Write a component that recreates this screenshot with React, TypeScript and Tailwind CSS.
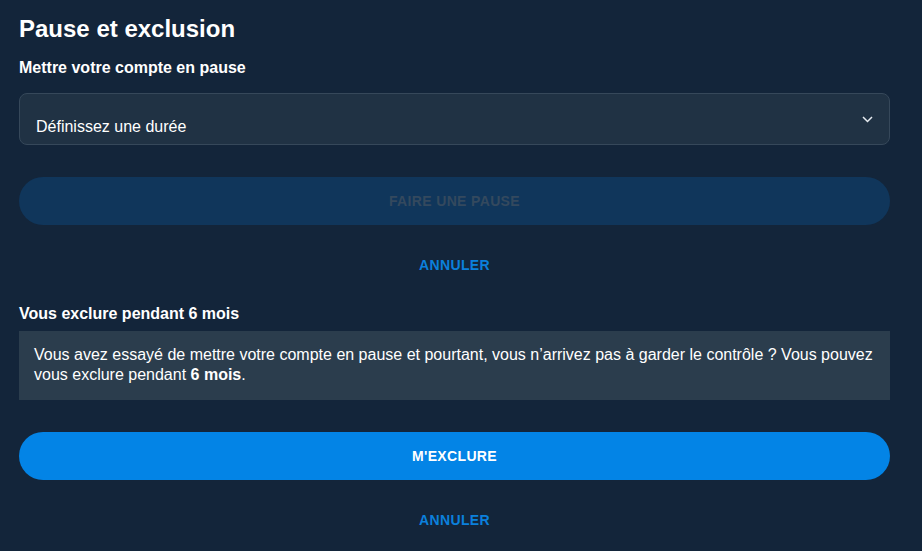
import React, { useState } from "react";

const durations = ["24 heures", "7 jours", "30 jours", "3 mois"];

const App = () => {
  const [duration, setDuration] = useState("");

  return (
    <div
      className="min-h-screen w-full bg-[#13253a] text-white"
      style={{ fontFamily: '"Liberation Sans", Arial, sans-serif' }}
    >
      <div className="w-[890px] pl-[19px] pt-[13px] pb-4">
        {/* PAUSE */}
        <h1 className="text-[24px] leading-8 font-bold">Pause et exclusion</h1>
        <h2 className="mt-[11px] text-[16px] leading-6 font-bold">
          Mettre votre compte en pause
        </h2>

        <div className="relative mt-[13px] h-[52px] rounded-lg border border-[#36485a] bg-[#203244]">
          <select
            value={duration}
            onChange={(e) => setDuration(e.target.value)}
            className="h-full w-full appearance-none bg-transparent pl-4 pr-10 pt-[21px] pb-[5px] text-[16px] leading-6 text-white outline-none"
          >
            <option value="" className="bg-[#203244]">
              Définissez une durée
            </option>
            {durations.map((d) => (
              <option key={d} value={d} className="bg-[#203244]">
                {d}
              </option>
            ))}
          </select>
          <svg
            className="pointer-events-none absolute right-[16px] top-[22px]"
            width="11"
            height="7"
            viewBox="0 0 11 7"
            fill="none"
          >
            <path d="M1 1l4.5 4.5L10 1" stroke="#e6ebf0" strokeWidth="1.5" />
          </svg>
        </div>

        <button
          disabled={!duration}
          className={
            duration
              ? "mt-8 h-12 w-full rounded-full bg-[#0384e6] text-[14px] font-bold tracking-wide text-white"
              : "mt-8 h-12 w-full rounded-full bg-[#10365b] text-[14px] font-bold tracking-wide text-[#34495e]"
          }
        >
          FAIRE UNE PAUSE
        </button>

        <div className="mt-[30px] flex justify-center">
          <button
            onClick={() => setDuration("")}
            className="text-[14px] leading-5 font-bold tracking-wide text-[#0b80dc]"
          >
            ANNULER
          </button>
        </div>

        {/* EXCLUSION */}
        <h2 className="mt-[27px] text-[16px] leading-6 font-bold">
          Vous exclure pendant 6 mois
        </h2>
        <div className="mt-[5px] bg-[#2b3d4d] pl-[15px] pr-[14px] pt-[14px] pb-[15px] text-[16px] leading-5">
          Vous avez essayé de mettre votre compte en pause et pourtant, vous
          n’arrivez pas à garder le contrôle ? Vous pouvez vous exclure pendant{" "}
          <span className="font-bold">6 mois</span>.
        </div>

        <button className="mt-8 h-12 w-full rounded-full bg-[#0384e6] text-[14px] font-bold tracking-wide text-white">
          M'EXCLURE
        </button>

        <div className="mt-[30px] flex justify-center">
          <button className="text-[14px] leading-5 font-bold tracking-wide text-[#0b80dc]">
            ANNULER
          </button>
        </div>
      </div>
    </div>
  );
};

export default App;
